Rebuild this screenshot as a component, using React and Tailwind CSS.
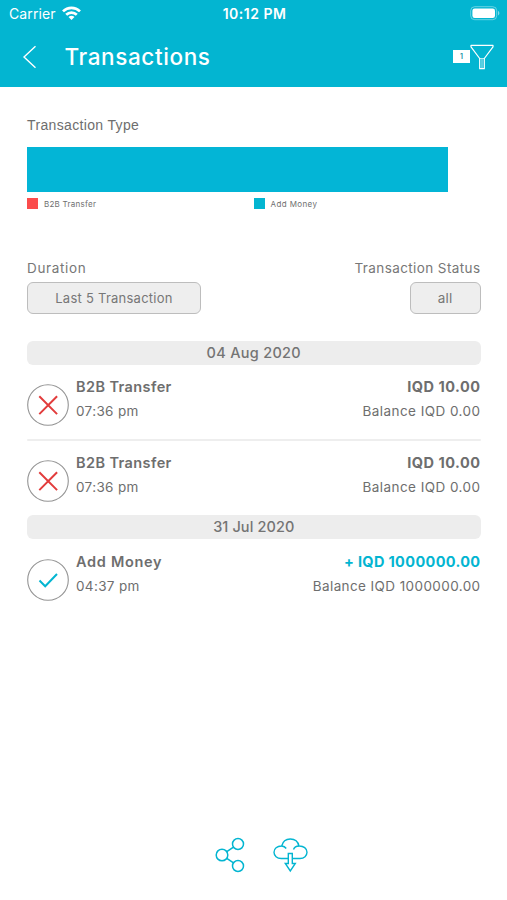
import React from "react";

const CYAN = "#03b5d1";

function StatusBar() {
  return (
    <div className="grid h-[27px] grid-cols-3 items-center pr-[7px] pl-[9px] text-white">
      <div className="flex items-center gap-[6px]">
        <span className="text-[14px] leading-[27px] tracking-[0.1px]">Carrier</span>
        <svg width="19" height="15" viewBox="0 0 19 15" fill="none" stroke="white" strokeWidth="2.7">
          <path d="M1 5.4a12.2 12.2 0 0 1 17 0" />
          <path d="M4.2 8.8a7.6 7.6 0 0 1 10.600 0" />
          <path d="M9.500 14 6.500 11.100a4.300 4.300 0 0 1 6 0Z" fill="white" stroke="none" />
        </svg>
      </div>
      <span className="text-center text-[14px] leading-[26px] font-semibold tracking-[0.5px] whitespace-nowrap">10:12 PM</span>
      <svg className="justify-self-end" width="30" height="15" viewBox="0 0 30 15">
        <rect x="0.700" y="0.700" width="26" height="13" rx="4" fill="none" stroke="white" strokeOpacity="0.4" />
        <rect x="2.400" y="2.400" width="22.600" height="9.600" rx="2.300" fill="white" />
        <path d="M28 5v4.400c1.800-.6 1.800-3.800 0-4.400Z" fill="white" fillOpacity="0.5" />
      </svg>
    </div>
  );
}

function Header() {
  return (
    <header className="h-[87px] bg-[#03b5d1]">
      <StatusBar />
      <div className="flex h-[59px] items-center pr-[13px] pl-[22px] text-white">
        <svg width="15" height="24" viewBox="0 0 15 24" fill="none" stroke="white" strokeWidth="1.400">
          <path d="M13.500 1.300 2 12l11.500 10.800" />
        </svg>
        <h1 className="ml-[27.5px] text-[22.5px] leading-[28px] font-medium tracking-[0.6px]">Transactions</h1>
        <div className="ml-auto flex items-center">
          <span className="flex h-[13px] w-[17px] items-center justify-center bg-white pt-px text-[7px] leading-[12px] font-semibold text-[#168ea2]">1</span>
          <svg width="24" height="26" viewBox="0 0 24 26" fill="none" stroke="white" strokeWidth="1.200" strokeLinejoin="round">
            <path d="M1 1.300h22v1.500L14.300 14.500v10.200H9.700V14.500L1 2.800Z" />
            <path d="M9.700 14.500h4.600M12 15v9" strokeWidth="0.700" />
          </svg>
        </div>
      </div>
    </header>
  );
}

function Legend({ swatch, label, spacing }) {
  return (
    <div className="flex h-[11px] w-[226.5px] items-center gap-[6px]">
      <span className={"size-[11px] " + swatch} />
      <span className={"pt-px text-[8px] leading-[11px] text-[#6f6f6f] " + spacing}>{label}</span>
    </div>
  );
}

function DateBar({ children, className }) {
  return (
    <div className={"h-[24px] rounded-[6px] bg-[#ededed] text-center text-[14.5px] leading-[24px] font-medium text-[#747474] " + className}>
      {children}
    </div>
  );
}

function StatusIcon({ ok }) {
  return (
    <svg className="mt-[9px] shrink-0" width="42" height="42" viewBox="0 0 42 42" fill="none">
      <circle cx="21" cy="21" r="20.300" stroke="#949494" strokeWidth="1.100" />
      {ok ? (
        <path d="m12.500 21.500 5.700 5.700L30 15" stroke={CYAN} strokeWidth="2" />
      ) : (
        <path d="m12.300 12.300 17.800 17.800M30.100 12.300 12.300 30.100" stroke="#e23c3c" strokeWidth="2" />
      )}
    </svg>
  );
}

function Transaction({ ok, title, titleClass, time, amount, amountClass, balance, balanceClass }) {
  return (
    <div className="flex h-[51px] text-[#6e6e6e]">
      <StatusIcon ok={ok} />
      <div className="ml-[7px] flex flex-col">
        <span className={"text-[14.5px] leading-[24px] font-semibold " + titleClass}>{title}</span>
        <span className="text-[13.5px] leading-[24px] tracking-[0.35px]">{time}</span>
      </div>
      <div className="ml-auto flex flex-col items-end">
        <span className={"text-[14.5px] leading-[24px] font-bold " + amountClass}>{amount}</span>
        <span className={"text-[13.5px] leading-[24px] " + balanceClass}>{balance}</span>
      </div>
    </div>
  );
}

export default function App() {
  return (
    <div className="flex h-[900px] w-[507px] flex-col overflow-hidden bg-white font-['Inter',sans-serif]">
      <Header />
      <main className="flex flex-col pr-[26.5px] pl-[27px]">
        <h2 className="mt-[28px] font-['Liberation_Sans',sans-serif] text-[14px] leading-[20px] tracking-[0.35px] text-[#6e6e6e]">Transaction Type</h2>
        <div className="mt-[11.500px] h-[45px] w-[421px] bg-[#03b5d6]" />
        <div className="mt-[6.500px] flex">
          <Legend swatch="bg-[#fb4c4c]" label="B2B Transfer" spacing="tracking-[0.25px]" />
          <Legend swatch="bg-[#03b5d1]" label="Add Money" spacing="tracking-[0.4px]" />
        </div>

        <div className="mt-[49px] flex justify-between text-[13.5px] text-[#777]">
          <div className="flex flex-col items-start">
            <span className="leading-[20px] tracking-[0.65px]">Duration</span>
            <button className="mt-[4px] h-[32px] w-[174px] rounded-[6px] border border-[#bdbdbd] bg-[#eee] pt-[2px] text-[13px] tracking-[0.25px]">Last 5 Transaction</button>
          </div>
          <div className="flex flex-col items-end">
            <span className="leading-[20px] tracking-[0.4px]">Transaction Status</span>
            <button className="mt-[4px] h-[32px] w-[71px] rounded-[6px] border border-[#bdbdbd] bg-[#eee] pt-[1px] tracking-[0.2px]">all</button>
          </div>
        </div>

        <DateBar className="mt-[26.500px] tracking-[0.3px]">04 Aug 2020</DateBar>
        <div className="mt-[10px]">
          <Transaction title="B2B Transfer" titleClass="tracking-[0.4px]" time="07:36 pm" amount="IQD 10.00" amountClass="tracking-[0.5px]" balance="Balance IQD 0.00" balanceClass="tracking-[0.45px]" />
          <div className="mt-[13px] mb-[9.500px] h-[2.500px] rounded bg-[#eee]" />
        </div>
        <Transaction title="B2B Transfer" titleClass="tracking-[0.4px]" time="07:36 pm" amount="IQD 10.00" amountClass="tracking-[0.5px]" balance="Balance IQD 0.00" balanceClass="tracking-[0.45px]" />
        <DateBar className="mt-[13.500px] tracking-[0.1px]">31 Jul 2020</DateBar>
        <div className="mt-[10.500px]">
          <Transaction ok title="Add Money" titleClass="tracking-[0.7px]" time="04:37 pm" amount="+ IQD 1000000.00" amountClass="tracking-[0.35px] text-[#03b5d1]" balance="Balance IQD 1000000.00" balanceClass="tracking-[0.4px]" />
        </div>
      </main>

      <footer className="mt-auto mb-[27px] flex items-center justify-center gap-[28px] pl-[15px]">
        <svg width="30" height="36" viewBox="0 0 30 36" fill="none" stroke={CYAN} strokeWidth="1.500">
          <circle cx="7" cy="18" r="5.800" />
          <circle cx="23" cy="7" r="5.500" />
          <circle cx="23" cy="29" r="5.500" />
          <path d="m11.800 14.700 6.700-4.600M11.800 21.300l6.700 4.600" />
        </svg>
        <svg width="35" height="36" viewBox="0 0 35 36" fill="none" stroke={CYAN} strokeWidth="1.400">
          <path d="M15.300 21.500H8.200C4 21.500 1 18.700 1 15.200 1 11.500 4 8.900 8.700 9 9.700 4.700 13 2 17.300 2c4.400 0 7.800 2.700 8.600 7 4.700-.2 8.100 2.500 8.100 6.300 0 3.400-2.900 6.200-7 6.200h-7.700" />
          <path d="M8.700 9c2.200.2 3.500 1 4.500 2.500M25.900 9c-2.500.1-4.600 1.400-5.400 3.500" />
          <path d="M15.300 16.500h4v10h3l-5 7.500-5-7.500h3Z" />
        </svg>
      </footer>
    </div>
  );
}
